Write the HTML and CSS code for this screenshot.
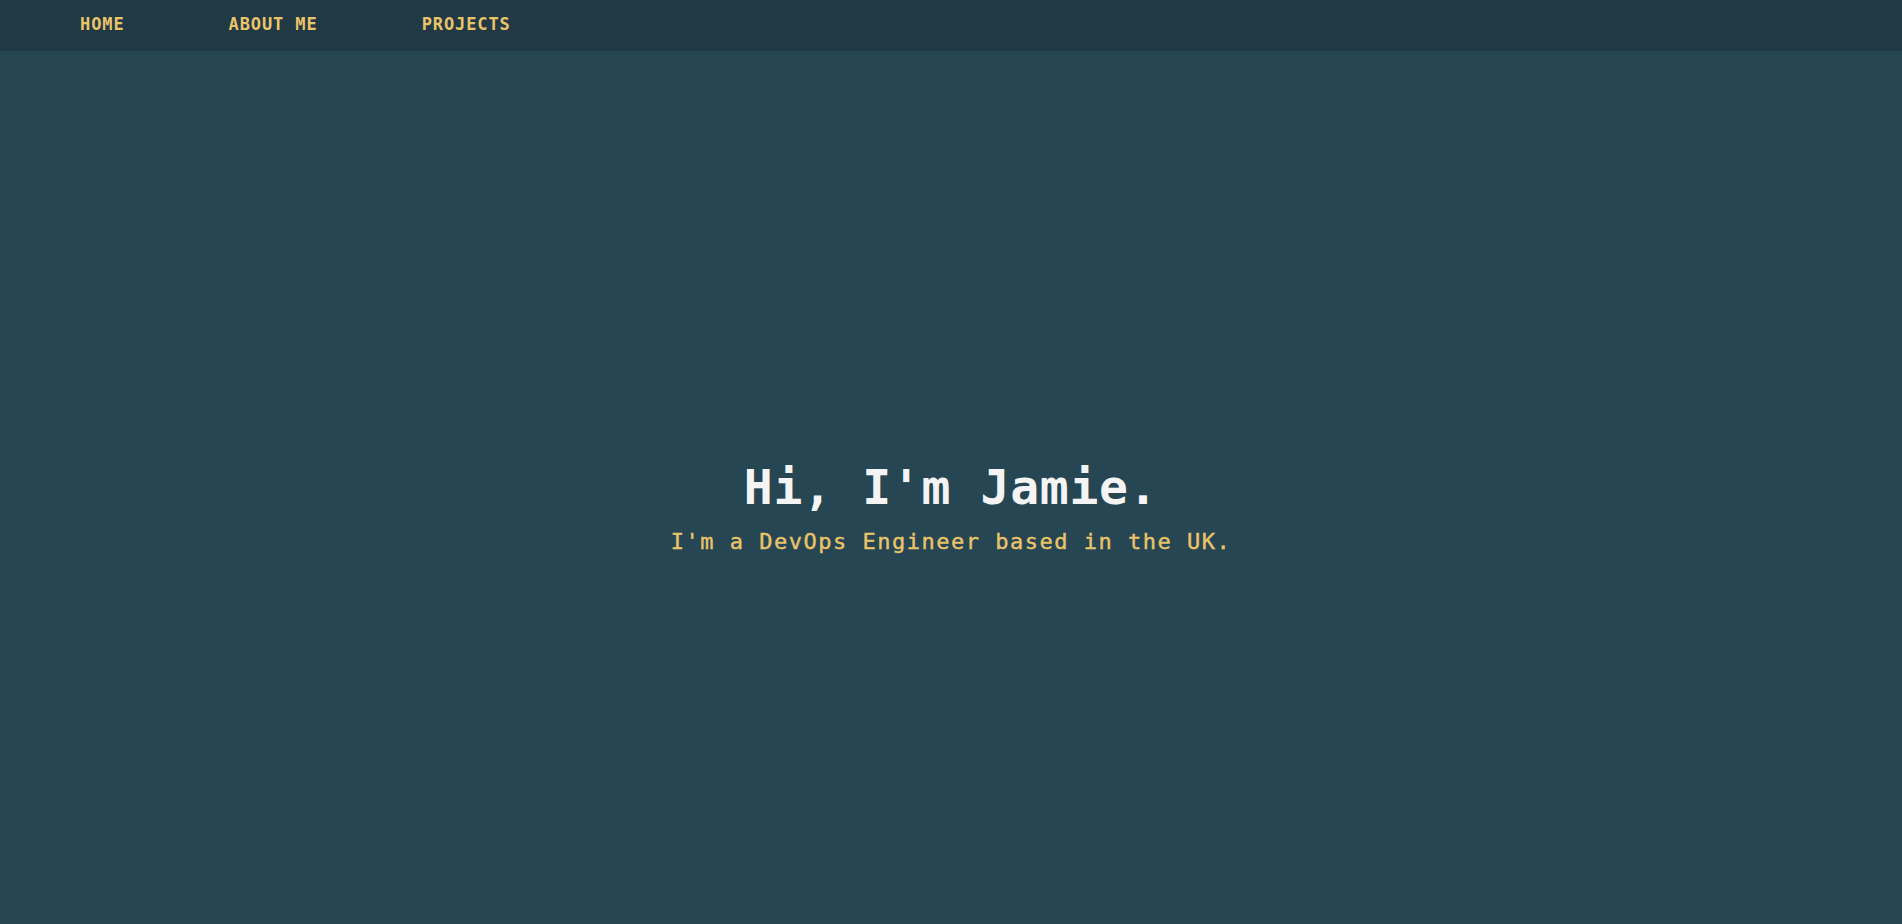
FILE: index.html
```html
<!DOCTYPE html>
<html lang="en">
<head>
<meta charset="utf-8">
<title>Jamie</title>
<link rel="stylesheet" href="styles.css">
</head>
<body>
<nav class="nav">
  <a class="nav-link" href="#">HOME</a>
  <a class="nav-link" href="#">ABOUT ME</a>
  <a class="nav-link" href="#">PROJECTS</a>
</nav>
<main class="hero">
  <h1 class="hero-title">Hi, I'm Jamie.</h1>
  <p class="hero-sub">I'm a DevOps Engineer based in the UK.</p>
</main>
</body>
</html>
```

FILE: styles.css
```css
html, body {
  margin: 0;
  padding: 0;
  height: 100%;
}
body {
  background: #264653;
  font-family: "DejaVu Sans Mono", "Liberation Mono", monospace;
  overflow: hidden;
}
.nav {
  height: 51px;
  background: #213845;
  display: flex;
  align-items: center;
  gap: 104px;
  padding: 0 0 4px 80px;
  box-sizing: border-box;
}
.nav-link {
  color: #e9c46a;
  text-decoration: none;
  font-weight: bold;
  font-size: 17px;
  letter-spacing: 0.9px;
  line-height: 20px;
}
.hero {
  height: calc(100% - 51px);
  display: flex;
  flex-direction: column;
  align-items: center;
  justify-content: center;
  padding-top: 38px;
  box-sizing: border-box;
}
.hero-title {
  margin: 0;
  color: #f4f4f4;
  font-size: 48px;
  font-weight: bold;
  line-height: 56px;
  letter-spacing: 0.7px;
}
.hero-sub {
  margin: 14px 0 0 0;
  color: #e9c46a;
  font-size: 22px;
  line-height: 26px;
  letter-spacing: 1.5px;
  -webkit-text-stroke: 0.4px #e9c46a;
}
```
